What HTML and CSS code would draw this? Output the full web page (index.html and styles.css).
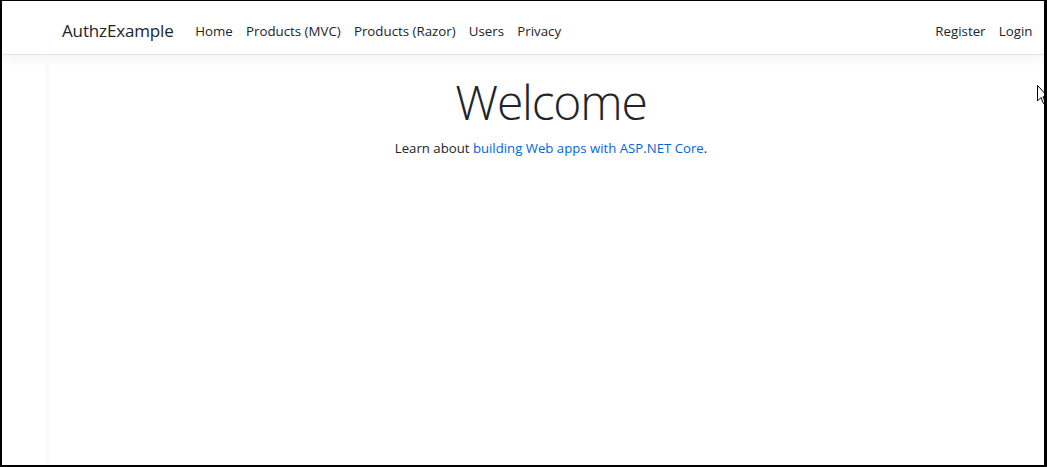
FILE: index.html
```html
<!DOCTYPE html>
<html lang="en">
<head>
<meta charset="utf-8">
<title>Home Page - AuthzExample</title>
<link rel="stylesheet" href="styles.css">
</head>
<body>
<div class="frame">
  <header class="navbar">
    <a class="brand" href="#">AuthzExample</a>
    <nav class="nav-left">
      <a class="nav-link" href="#">Home</a>
      <a class="nav-link" href="#">Products (MVC)</a>
      <a class="nav-link" href="#">Products (Razor)</a>
      <a class="nav-link" href="#">Users</a>
      <a class="nav-link" href="#">Privacy</a>
    </nav>
    <nav class="nav-right">
      <a class="nav-link" href="#">Register</a>
      <a class="nav-link" href="#">Login</a>
    </nav>
  </header>
  <main class="main">
    <div class="hero">
      <h1 class="display">Welcome</h1>
      <p class="lead-text">Learn about <a href="#" class="link">building Web apps with ASP.NET Core</a>.</p>
    </div>
  </main>
  <svg class="cursor" width="12" height="20" viewBox="0 0 12 20">
    <path d="M0.5 0.5 L0.5 16 L4 12.5 L6.5 18.5 L8.5 17.5 L6 11.8 L11 11.8 Z" fill="#fff" stroke="#000" stroke-width="1"/>
  </svg>
</div>
</body>
</html>
```
FILE: styles.css
```css
html, body {
  margin: 0;
  padding: 0;
  background: #fff;
}
body {
  font-family: "Open Sans", "Noto Sans", sans-serif;
  color: #212529;
}
.frame {
  position: relative;
  width: 1047px;
  height: 467px;
  box-sizing: border-box;
  border-style: solid;
  border-color: #000;
  border-width: 1px 3px 2px 2px;
  overflow: hidden;
  background: #fff;
}
.navbar {
  display: flex;
  align-items: center;
  height: 47px;
  padding: 6px 5px 0 60px;
  border-bottom: 1px solid #e5e5e5;
  box-shadow: 0 4px 12px rgba(0, 0, 0, 0.05);
}
.brand {
  font-size: 17px;
  color: #212529;
  text-decoration: none;
  margin-right: 15px;
  letter-spacing: -0.15px;
}
.nav-left, .nav-right {
  display: flex;
}
.nav-right {
  margin-left: auto;
}
.nav-link {
  font-size: 13.3px;
  color: #212529;
  text-decoration: none;
  padding: 0 6.6px;
}
.main {
  margin-left: 44px;
  border-left: 3px solid #fafafa;
  padding-left: 9px;
  height: 410px;
}
.hero {
  text-align: center;
  padding-top: 18px;
}
.display {
  font-size: 48px;
  font-weight: 300;
  line-height: 1.2;
  margin: 0 0 8px;
  letter-spacing: -1.2px;
}
.lead-text {
  font-size: 13.2px;
  margin: 0;
}
.link {
  color: #0366d6;
  text-decoration: none;
}
.cursor {
  position: absolute;
  left: 1035px;
  top: 84px;
}
```
